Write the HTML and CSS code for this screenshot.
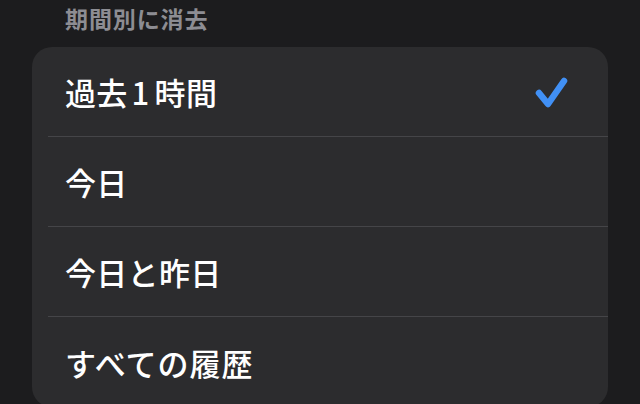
FILE: index.html
```html
<!DOCTYPE html>
<html lang="ja">
<head>
<meta charset="utf-8">
<link rel="stylesheet" href="styles.css">
</head>
<body>
<div class="screen">
  <div class="section-title">期間別に消去</div>
  <div class="card">
    <div class="row">
      <span class="label">過去<span class="num">1</span>時間</span>
      <svg class="check" width="34" height="34" viewBox="0 0 34 34">
        <path d="M5 19 L14 30 L30 7" fill="none" stroke="#4190f5" stroke-width="6.5" stroke-linecap="round" stroke-linejoin="round"/>
      </svg>
    </div>
    <div class="row"><span class="label">今日</span></div>
    <div class="row"><span class="label">今日と昨日</span></div>
    <div class="row"><span class="label kana">すべての履歴</span></div>
  </div>
</div>
</body>
</html>
```

FILE: styles.css
```css
html, body {
  margin: 0;
  padding: 0;
  background: #1c1c1e;
}
body {
  font-family: "Noto Sans CJK JP", "Noto Sans", sans-serif;
  overflow: hidden;
}
.screen {
  width: 640px;
  height: 404px;
  padding: 0 32px;
  box-sizing: border-box;
}
.section-title {
  height: 47px;
  padding: 2px 0 0 33px;
  box-sizing: border-box;
  font-size: 23px;
  line-height: 32px;
  font-weight: 700;
  color: #8d8d93;
  letter-spacing: 0.9px;
}
.card {
  background: #2c2c2e;
  border-radius: 20px;
  padding-left: 16px;
}
.row {
  height: 90px;
  display: flex;
  align-items: center;
  justify-content: space-between;
  padding-right: 40px;
  box-sizing: border-box;
  border-bottom: 1px solid #454548;
}
.row:last-child {
  border-bottom: none;
}
.label {
  padding-left: 17px;
  font-size: 31px;
  font-weight: 500;
  color: #ffffff;
  letter-spacing: 0.3px;
}
.label.kana {
  letter-spacing: 1px;
}
.num {
  padding: 0 5px 0 4px;
}
.check {
  display: block;
  margin-top: -2px;
}
```
